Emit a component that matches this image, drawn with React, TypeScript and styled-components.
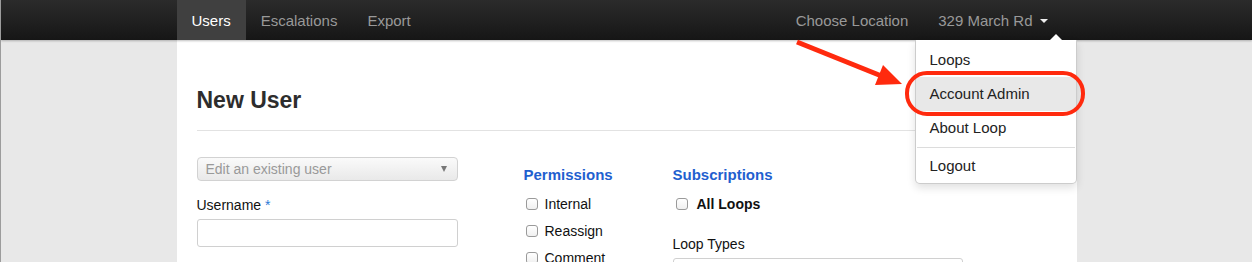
import React from 'react';
import styled, {createGlobalStyle} from 'styled-components';

const GlobalStyle = createGlobalStyle`
  html, body {
    margin: 0;
    padding: 0;
    background: #e8e8e8;
    font-family: "Liberation Sans", Arial, sans-serif;
    color: #333;
    overflow: hidden;
  }
  body {
    border-left: 1px solid #9c9c9c;
  }
`;

const Navbar = styled.div`
  height: 40px;
  background: linear-gradient(#2b2b2b, #161616);
  box-shadow: 0 1px 2px rgba(0, 0, 0, 0.25);
  position: relative;
  z-index: 2;
`;

const NavInner = styled.div`
  width: 900px;
  margin: 0 auto;
  height: 40px;
  display: flex;
  justify-content: space-between;
  position: relative;
`;

const NavList = styled.div<{ $right?: boolean }>`
  display: flex;
  height: 40px;
  padding-right: ${p => (p.$right ? '14px' : '0')};
`;

const NavItem = styled.div<{ $active?: boolean }>`
  display: flex;
  align-items: center;
  gap: 7px;
  padding: 0 15px;
  font-size: 15px;
  color: ${p => (p.$active ? '#fff' : '#999')};
  background: ${p => (p.$active ? '#404040' : 'transparent')};
`;

const Caret = styled.span`
  width: 0;
  height: 0;
  border-left: 4px solid transparent;
  border-right: 4px solid transparent;
  border-top: 4px solid #eee;
  margin-top: 1px;
`;

const DropdownMenu = styled.div`
  position: absolute;
  top: 40px;
  right: 0;
  width: 160px;
  background: #fff;
  border: 1px solid rgba(0, 0, 0, 0.2);
  border-top: none;
  border-radius: 0 0 5px 5px;
  padding: 3px 0 0;
  box-shadow: 0 4px 8px rgba(0, 0, 0, 0.12);

  &:before {
    content: '';
    position: absolute;
    top: -6px;
    right: 14px;
    border-left: 6px solid transparent;
    border-right: 6px solid transparent;
    border-bottom: 6px solid #fff;
  }
`;

const MenuItem = styled.div<{ $hover?: boolean; $height?: number }>`
  height: ${p => p.$height ?? 34}px;
  line-height: 34px;
  padding-left: 14px;
  font-size: 15px;
  color: #222;
  background: ${p => (p.$hover ? '#e8e8e8' : 'transparent')};
`;

const MenuDivider = styled.div`
  height: 1px;
  margin: 0 1px 1px;
  background: #dcdcdc;
`;

const Ring = styled.div`
  position: absolute;
  left: 728px;
  top: 71px;
  width: 180px;
  height: 45px;
  box-sizing: border-box;
  border: 4px solid #ff2a0e;
  border-radius: 22px;
  z-index: 3;
`;

const ArrowSvg = styled.svg`
  position: absolute;
  left: 615px;
  top: 36px;
  z-index: 3;
  overflow: visible;
`;

const Panel = styled.div`
  width: 900px;
  margin: 0 auto;
  background: #fff;
  min-height: 222px;
  padding: 45px 20px 0;
  box-sizing: border-box;
`;

const Title = styled.h3`
  margin: 0;
  font-size: 23px;
  line-height: 30px;
  font-weight: bold;
  color: #2d2d2d;
`;

const Rule = styled.div`
  height: 1px;
  background: #e2e2e2;
  margin-top: 15px;
`;

const FormRow = styled.div`
  display: flex;
  margin-top: 26px;
`;

const Column = styled.div<{ $width: number; $gap?: number }>`
  width: ${p => p.$width}px;
  margin-right: ${p => p.$gap ?? 0}px;
  display: flex;
  flex-direction: column;
`;

const SelectBox = styled.div`
  height: 24px;
  box-sizing: border-box;
  border: 1px solid #d2d2d2;
  border-radius: 4px;
  background: linear-gradient(#fafafa, #e9e9e9);
  display: flex;
  align-items: center;
  justify-content: space-between;
  padding: 0 10px 0 8px;
  font-size: 14px;
  color: #999;
`;

const SelectArrow = styled.span`
  width: 0;
  height: 0;
  border-left: 3.5px solid transparent;
  border-right: 3.5px solid transparent;
  border-top: 6px solid #777;
`;

const FieldLabel = styled.div<{ $top: number }>`
  margin-top: ${p => p.$top}px;
  font-size: 14px;
  line-height: 20px;
  color: #111;
`;

const Required = styled.span`
  color: #2a7bd6;
`;

const TextInput = styled.div<{ $width?: number }>`
  margin-top: 4px;
  height: 28px;
  width: ${p => (p.$width ? `${p.$width}px` : '100%')};
  box-sizing: border-box;
  border: 1px solid #d0d0d0;
  border-radius: 3px;
  background: #fff;
`;

const SectionHeading = styled.div`
  margin-top: 8px;
  font-size: 15px;
  line-height: 20px;
  font-weight: bold;
  color: #1f60cf;
  margin-bottom: 5px;
`;

const CheckRow = styled.div<{ $indent: number; $gap: number; $bold?: boolean }>`
  height: 27px;
  display: flex;
  align-items: center;
  gap: ${p => p.$gap}px;
  padding-left: ${p => p.$indent}px;
  font-size: 14px;
  font-weight: ${p => (p.$bold ? 'bold' : 'normal')};
  color: #111;
`;

const Box = styled.span`
  width: 12px;
  height: 12px;
  box-sizing: border-box;
  border: 1px solid #9a9a9a;
  border-radius: 3px;
  background: linear-gradient(#fff, #f0f0f0);
  flex: none;
`;

const permissions = ['Internal', 'Reassign', 'Comment'];

const App: React.FC = () => {
    return (
        <>
            <GlobalStyle/>
            <Navbar>
                <NavInner>
                    <NavList>
                        <NavItem $active>Users</NavItem>
                        <NavItem>Escalations</NavItem>
                        <NavItem>Export</NavItem>
                    </NavList>
                    <NavList $right>
                        <NavItem>Choose Location</NavItem>
                        <NavItem>329 March Rd <Caret/></NavItem>
                    </NavList>
                    <DropdownMenu>
                        <MenuItem>Loops</MenuItem>
                        <MenuItem $hover>Account Admin</MenuItem>
                        <MenuItem $height={36}>About Loop</MenuItem>
                        <MenuDivider/>
                        <MenuItem>Logout</MenuItem>
                    </DropdownMenu>
                    <ArrowSvg width="120" height="60" viewBox="0 0 120 60">
                        <line x1="5" y1="6" x2="92" y2="41" stroke="#ff2a0e" strokeWidth="5"/>
                        <polygon points="83,49 110,48 91,29" fill="#ff2a0e"/>
                    </ArrowSvg>
                    <Ring/>
                </NavInner>
            </Navbar>
            <Panel>
                <Title>New User</Title>
                <Rule/>
                <FormRow>
                    <Column $width={261} $gap={66}>
                        <SelectBox>
                            Edit an existing user
                            <SelectArrow/>
                        </SelectBox>
                        <FieldLabel $top={14}>Username <Required>*</Required></FieldLabel>
                        <TextInput/>
                    </Column>
                    <Column $width={149}>
                        <SectionHeading>Permissions</SectionHeading>
                        {permissions.map(p => (
                            <CheckRow key={p} $indent={2} $gap={7}>
                                <Box/>
                                {p}
                            </CheckRow>
                        ))}
                    </Column>
                    <Column $width={300}>
                        <SectionHeading>Subscriptions</SectionHeading>
                        <CheckRow $indent={3} $gap={9} $bold>
                            <Box/>
                            All Loops
                        </CheckRow>
                        <FieldLabel $top={17}>Loop Types</FieldLabel>
                        <TextInput $width={290}/>
                    </Column>
                </FormRow>
            </Panel>
        </>
    );
};

export default App;
